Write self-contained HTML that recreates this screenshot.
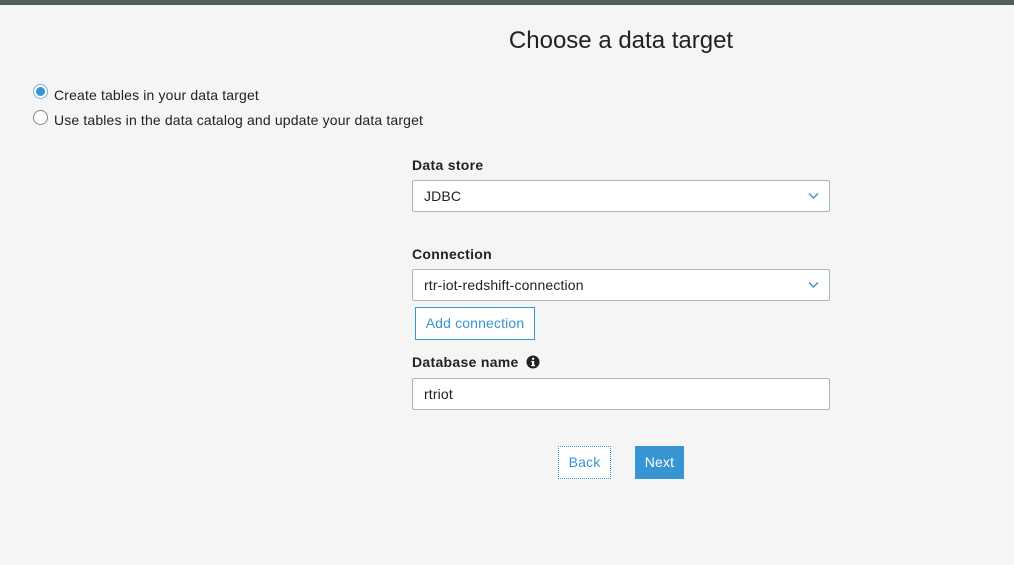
<!DOCTYPE html>
<html><head><style>
*{box-sizing:border-box;margin:0;padding:0}
body{width:1014px;height:565px;background:#f4f5f4;font-family:"Liberation Sans",Arial,sans-serif;color:#222;position:relative;overflow:hidden;font-size:14px;letter-spacing:0.15px}
.top{position:absolute;left:0;top:0;width:1014px;height:5px;background:#545b5f}
.abs{position:absolute}
h1{position:absolute;left:0;width:1242px;text-align:center;top:27px;font-size:24px;font-weight:normal;color:#222;letter-spacing:0}
.radio{position:absolute;left:33px;width:15px;height:15px;border-radius:50%;border:1px solid #888;background:#fff}
.radio.on::after{content:"";position:absolute;left:2px;top:2px;width:9px;height:9px;border-radius:50%;background:#3895d3}
.radio.on{border-color:#7ab0d8}
.lbl{position:absolute;left:412px;font-weight:bold;font-size:14px;letter-spacing:0.3px}
.box{position:absolute;left:412px;width:418px;height:32px;background:#fff;border:1px solid #aab7b8;border-radius:2px;padding-left:11px;line-height:30px;font-size:14px}
.chev{position:absolute;right:10px;top:11px}
</style></head><body>
<div class="top"></div>
<h1>Choose a data target</h1>
<div class="radio on" style="top:84px"></div>
<div class="abs" style="left:54px;top:87px">Create tables in your data target</div>
<div class="radio" style="top:110px"></div>
<div class="abs" style="left:54px;top:112px">Use tables in the data catalog and update your data target</div>

<div class="lbl" style="top:157px">Data store</div>
<div class="box" style="top:180px">JDBC<svg class="chev" width="11" height="8" viewBox="0 0 11 8"><path d="M1 1.5l4.5 4.5 4.5-4.5" fill="none" stroke="#3895d3" stroke-width="1.5"/></svg></div>

<div class="lbl" style="top:246px">Connection</div>
<div class="box" style="top:269px">rtr-iot-redshift-connection<svg class="chev" width="11" height="8" viewBox="0 0 11 8"><path d="M1 1.5l4.5 4.5 4.5-4.5" fill="none" stroke="#3895d3" stroke-width="1.5"/></svg></div>

<div class="abs" style="left:415px;top:307px;width:120px;height:33px;border:1px solid #3895d3;background:#fff;color:#3895d3;text-align:center;line-height:31px">Add connection</div>

<div class="lbl" style="top:354px">Database name</div>
<svg class="abs" style="left:526px;top:355px" width="14" height="14" viewBox="0 0 14 14"><circle cx="7" cy="7" r="6.5" fill="#222"/><rect x="6" y="6" width="2.2" height="5" fill="#fff"/><rect x="5.2" y="10" width="3.8" height="1.2" fill="#fff"/><rect x="5.2" y="6" width="2" height="1.1" fill="#fff"/><circle cx="7.1" cy="3.8" r="1.2" fill="#fff"/></svg>
<div class="box" style="top:378px">rtriot</div>

<div class="abs" style="left:558px;top:446px;width:53px;height:33px;border:1px dotted #3895d3;background:#fff;color:#3895d3;text-align:center;line-height:31px">Back</div>
<div class="abs" style="left:635px;top:446px;width:49px;height:33px;background:#3895d3;color:#fff;text-align:center;line-height:33px">Next</div>
</body></html>
